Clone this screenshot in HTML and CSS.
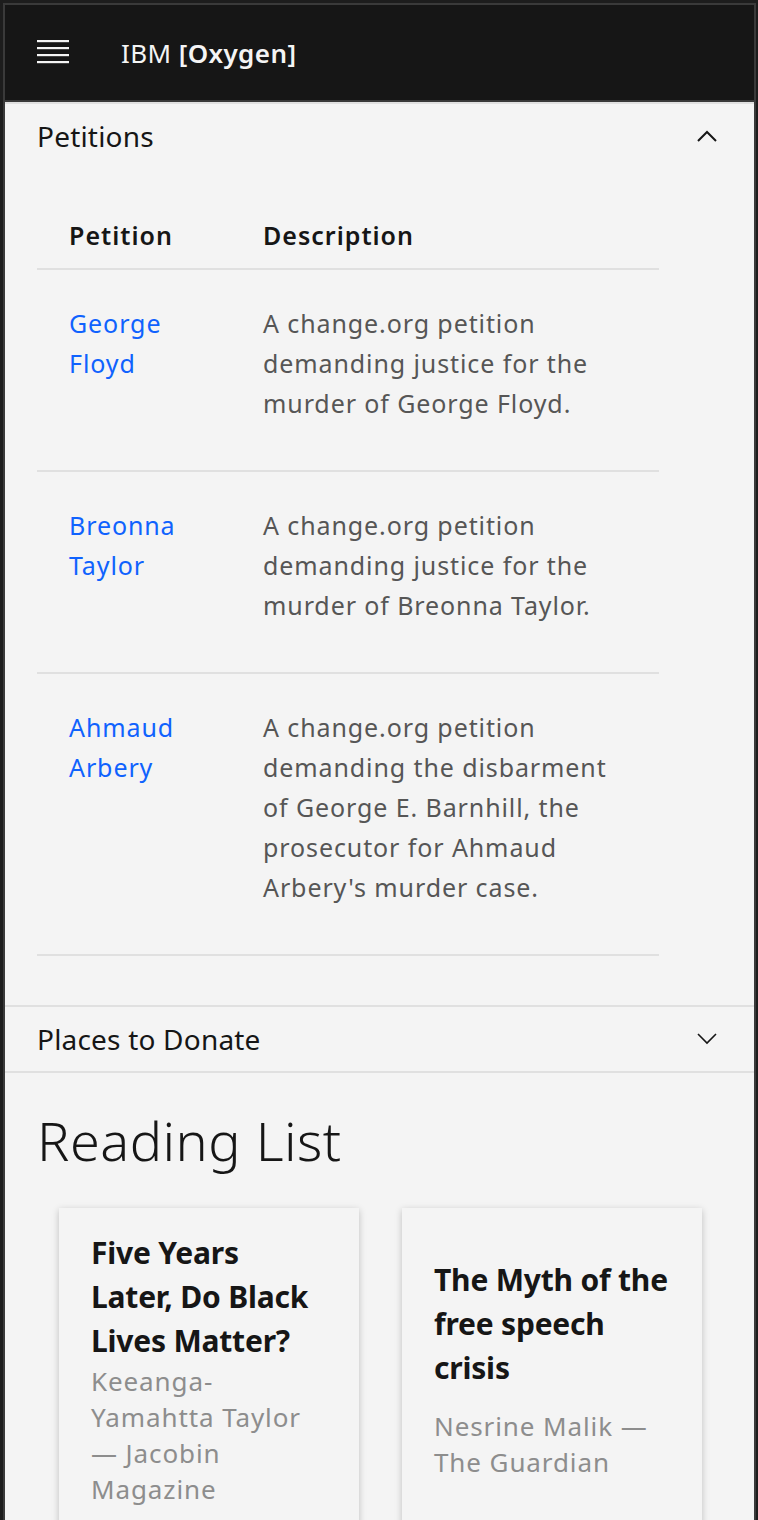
FILE: index.html
```html
<!DOCTYPE html>
<html lang="en">
<head>
<meta charset="utf-8">
<title>IBM [Oxygen]</title>
<link rel="stylesheet" href="styles.css">
</head>
<body>
<div class="frame">
  <header class="header">
    <button class="menu-btn" aria-label="Menu">
      <svg width="32" height="24" viewBox="0 0 32 24" fill="#f4f4f4">
        <rect x="0" y="0" width="32" height="2.2"/>
        <rect x="0" y="7" width="32" height="2.2"/>
        <rect x="0" y="14" width="32" height="2.2"/>
        <rect x="0" y="21" width="32" height="2.2"/>
      </svg>
    </button>
    <a class="brand" href="#">IBM <b>[Oxygen]</b></a>
  </header>

  <main>
    <section class="accordion">
      <div class="acc-item">
        <div class="acc-heading">
          <span class="acc-title">Petitions</span>
          <svg class="chev" width="20" height="12" viewBox="0 0 20 12"><polyline points="1,11 10,2 19,11" fill="none" stroke="#161616" stroke-width="2"/></svg>
        </div>
        <div class="acc-content">
          <table class="ptable">
            <colgroup><col class="c1"><col class="c2"></colgroup>
            <thead>
              <tr><th>Petition</th><th>Description</th></tr>
            </thead>
            <tbody>
              <tr>
                <td><a href="#">George<br>Floyd</a></td>
                <td>A change.org petition<br>demanding justice for the<br>murder of George Floyd.</td>
              </tr>
              <tr>
                <td><a href="#">Breonna<br>Taylor</a></td>
                <td>A change.org petition<br>demanding justice for the<br>murder of Breonna Taylor.</td>
              </tr>
              <tr>
                <td><a href="#">Ahmaud<br>Arbery</a></td>
                <td>A change.org petition<br>demanding the disbarment<br>of George E. Barnhill, the<br>prosecutor for Ahmaud<br>Arbery's murder case.</td>
              </tr>
            </tbody>
          </table>
        </div>
      </div>
      <div class="acc-item last">
        <div class="acc-heading">
          <span class="acc-title">Places to Donate</span>
          <svg class="chev" width="20" height="12" viewBox="0 0 20 12"><polyline points="1,1 10,10 19,1" fill="none" stroke="#161616" stroke-width="1.6"/></svg>
        </div>
      </div>
    </section>

    <section class="reading">
      <h1 class="reading-title">Reading List</h1>
      <div class="cards">
        <article class="card">
          <h3 class="card-title">Five Years<br>Later, Do Black<br>Lives Matter?</h3>
          <p class="card-sub">Keeanga-<br>Yamahtta Taylor<br>— Jacobin<br>Magazine</p>
        </article>
        <article class="card">
          <h3 class="card-title">The Myth of the<br>free speech<br>crisis</h3>
          <p class="card-sub spaced">Nesrine Malik —<br>The Guardian</p>
        </article>
      </div>
    </section>
  </main>
</div>
</body>
</html>
```

FILE: styles.css
```css
html, body {
  margin: 0;
  padding: 0;
  background: #1d1d1d;
}

body {
  font-family: "Noto Sans", "Open Sans", sans-serif;
  color: #161616;
}

.frame {
  margin: 3px 2px 0 3px;
  border: 2px solid #3a3a3a;
  border-bottom: 0;
  background: #f4f4f4;
  min-height: 1600px;
}

/* Header */
.header {
  height: 95px;
  background: #161616;
  border-bottom: 2px solid #393939;
  display: flex;
  align-items: center;
  padding-left: 32px;
}

.menu-btn {
  background: none;
  border: 0;
  padding: 0;
  width: 32px;
  height: 24px;
  margin-right: 52px;
  display: flex;
  margin-top: -1px;
}

.brand {
  color: #f4f4f4;
  text-decoration: none;
  font-size: 26px;
  line-height: 32px;
  letter-spacing: 0.4px;
  padding-top: 1px;
}

.brand b {
  font-weight: 600;
}

/* Accordion */
.acc-item {
  border-top: 2px solid #e0e0e0;
}

.acc-item.last {
  border-bottom: 2px solid #e0e0e0;
}

.acc-heading {
  height: 64px;
  display: flex;
  align-items: center;
  justify-content: space-between;
  padding: 0 37px 0 32px;
}

.acc-title {
  font-size: 28px;
  line-height: 36px;
  letter-spacing: 0.2px;
  color: #161616;
}

.chev {
  display: block;
}

.acc-content {
  padding: 33px 95px 49px 32px;
}

.ptable {
  width: 622px;
  table-layout: fixed;
  border-collapse: collapse;
  font-size: 25px;
  line-height: 40px;
}

.ptable .c1 { width: 194px; }
.ptable .c2 { width: 428px; }

.ptable th {
  text-align: left;
  font-weight: 600;
  color: #161616;
  letter-spacing: 1px;
  padding: 14px 32px 13px 32px;
  border-bottom: 2px solid #e0e0e0;
}

.ptable td {
  vertical-align: top;
  padding: 33px 32px 47px 32px;
  border-bottom: 2px solid #e0e0e0;
  color: #565656;
  letter-spacing: 0.9px;
  white-space: nowrap;
}

.ptable a {
  color: #0f62fe;
  text-decoration: none;
}

/* Reading list */
.reading {
  padding-top: 35px;
}

.reading-title {
  margin: 0 0 36px 0;
  padding-left: 32px;
  font-size: 54px;
  line-height: 64px;
  font-weight: 300;
  letter-spacing: 0.5px;
  color: #161616;
}

.cards {
  display: flex;
  gap: 43px;
  padding-left: 54px;
}

.card {
  width: 300px;
  box-sizing: border-box;
  padding: 23px 32px 19px;
  background: #f4f4f4;
  box-shadow: 0 2px 7px rgba(0, 0, 0, 0.22);
  display: flex;
  flex-direction: column;
  justify-content: center;
}

.card-title {
  margin: 0;
  font-size: 30px;
  line-height: 44px;
  font-weight: 700;
  letter-spacing: -0.2px;
  color: #161616;
  white-space: nowrap;
}

.card-sub {
  margin: 0;
  font-size: 26px;
  line-height: 36px;
  font-weight: 400;
  letter-spacing: 0.9px;
  color: #8d8d8d;
  white-space: nowrap;
}

.card-sub.spaced {
  margin-top: 18px;
}
```
